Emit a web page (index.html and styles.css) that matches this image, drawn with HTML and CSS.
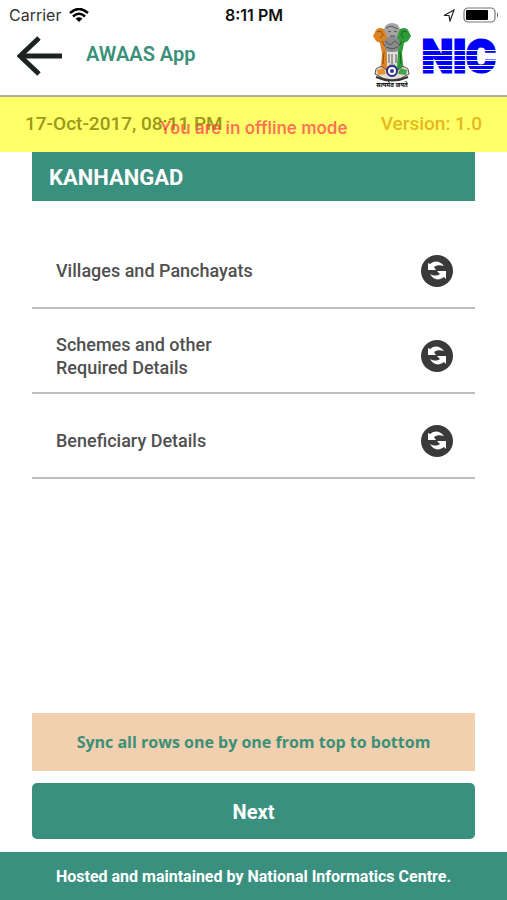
FILE: index.html
```html
<!DOCTYPE html>
<html lang="en">
<head>
  <meta charset="UTF-8">
  <meta name="viewport" content="width=device-width, initial-scale=1.0">
  <title>AWAAS App</title>
  <link rel="stylesheet" href="styles.css">
</head>
<body>
  <!-- Shared sync icon -->
  <svg class="icon-defs" aria-hidden="true">
    <symbol id="sync" viewBox="0 0 32 32">
      <circle cx="16" cy="16" r="16" fill="#3a3a3a"/>
      <path d="M7 8v7h8l-2-3c3-2 6-2 10-1-4-5-9-6-14-2z" fill="#fff"/>
      <path d="M25 24v-8h-9l3 3c-3 2-6 2-10 0 3 6 9 7 14 3z" fill="#fff"/>
    </symbol>
  </svg>

  <header>
    <div class="status-bar">
      <div class="carrier">
        <span>Carrier</span>
        <svg width="20" height="14" viewBox="0 0 20 14" fill="none" stroke="#000" stroke-width="2.500">
          <path d="M1 5Q10-3 19 5M4 8.500Q10 3 16 8.500"/>
          <path d="M6.500 10.500Q10 8 13.500 10.500L10 14z" fill="#000" stroke="none"/>
        </svg>
      </div>
      <span class="clock">8:11 PM</span>
      <div class="indicators">
        <svg width="12" height="13" viewBox="0 0 12 13" fill="none" stroke="#222" stroke-width="1.200">
          <path d="M11 1L1 6.500H6L7 12z"/>
        </svg>
        <svg width="36" height="16" viewBox="0 0 36 16">
          <rect x="1" y="1" width="31" height="14" rx="4" fill="#fff" stroke="#777" stroke-width="1.200"/>
          <rect x="3" y="3" width="22" height="10" rx="1"/>
          <path d="M34 5q2 3 0 6z" fill="#555"/>
        </svg>
      </div>
    </div>

    <div class="nav-bar">
      <button class="back" type="button" aria-label="Back">
        <svg width="46" height="40" viewBox="0 0 46 40" fill="none" stroke="#1d2222">
          <path d="M45 20H3" stroke-width="5"/>
          <path d="M22 2L3 20L22 38" stroke-width="5"/>
        </svg>
      </button>
      <h1>AWAAS App</h1>
      <svg class="emblem" width="40" height="66" viewBox="0 0 40 66">
        <path d="M14 2Q20-2 26 2L29 8L27 19L30 29V48H10V29L13 19L11 8z" fill="#a5a5a5"/>
        <path d="M12 6Q5 3 3 9L1 13L4 18L8 20L10 30L9 42L4 49L16 51L19 37L14 29L14 20L15 14z" fill="#dc8424"/>
        <path d="M28 6Q35 3 37 9L39 13L36 18L32 20L30 30L31 42L36 49L24 51L21 37L26 29L26 20L25 14z" fill="#2f9b38"/>
        <circle cx="20" cy="21" r="8" fill="#8b8b8b"/>
        <path d="M15 29h11l-1 15-5-5-5 5z" fill="#e2e2e2"/>
        <path d="M14 5l5-2 7 3M16 9l3-1m3 0l3 1M18 13h5M13 18l5 4 5-4 5 4M14 24l6 2 6-2M17 31v9m3-9v9m4-9v9" fill="none" stroke="#555"/>
        <path d="M5 9l4-1 2 4-3 3M10 18l3 5M12 29l-1 12" fill="none" stroke="#8d4f16"/>
        <path d="M35 9l-4-1-2 4 3 3M30 18l-3 5M28 29l1 12" fill="none" stroke="#176322"/>
        <path d="M4 46Q10 41 14 47H26Q30 41 36 46L37 51Q28 57 20 57T3 51z" fill="#e6dfd4" stroke="#555"/>
        <path d="M5 47l7-2 2 6-8 1z" fill="#e59135"/>
        <path d="M35 47l-7-2-2 6 8 1z" fill="#44a44a"/>
        <path d="M4 54Q20 61 36 54" fill="none" stroke="#333" stroke-width="2"/>
        <circle cx="20" cy="48" r="5" fill="#fff" stroke="#292889" stroke-width="2"/>
        <circle cx="20" cy="48" r="2" fill="#34349a"/>
        <text x="20" y="64" class="motto">सत्यमेव जयते</text>
      </svg>
      <svg class="nic" width="76" height="38" viewBox="0 0 76 38" role="img" aria-label="NIC">
        <text class="nic-text" x="0" y="35">NIC</text>
        <path d="M0 13.500H76M0 18.500H76M0 23.500H76M0 28.500H76M0 32.500H76" stroke="#fff" stroke-width="1"/>
      </svg>
    </div>
  </header>

  <section class="info">
    <time>17-Oct-2017, 08:11 PM</time>
    <span class="version">Version: 1.0</span>
    <p class="offline">You are in offline mode</p>
  </section>

  <main>
    <h2>KANHANGAD</h2>
    <ul class="sync-list">
      <li>
        <span>Villages and Panchayats</span>
        <button type="button" aria-label="Sync villages and panchayats"><svg width="32" height="32"><use href="#sync"/></svg></button>
      </li>
      <li>
        <span>Schemes and other Required Details</span>
        <button type="button" aria-label="Sync schemes"><svg width="32" height="32"><use href="#sync"/></svg></button>
      </li>
      <li>
        <span>Beneficiary Details</span>
        <button type="button" aria-label="Sync beneficiary details"><svg width="32" height="32"><use href="#sync"/></svg></button>
      </li>
    </ul>
    <p class="hint">Sync all rows one by one from top to bottom</p>
    <button class="next" type="button">Next</button>
  </main>

  <footer>Hosted and maintained by National Informatics Centre.</footer>
</body>
</html>
```

FILE: styles.css
```css
* {
  box-sizing: border-box;
}
body {
  margin: 0;
  min-height: 100vh;
  display: flex;
  flex-direction: column;
  font-family: Roboto, sans-serif;
  background: #fff;
}
h1, h2, p, ul {
  margin: 0;
  padding: 0;
}
button {
  border: none;
  padding: 0;
  background: none;
  font-family: inherit;
  cursor: pointer;
}
svg {
  display: block;
}
.icon-defs {
  position: absolute;
  width: 0;
  height: 0;
}
header {
  border-bottom: 2px solid #b0b0a0;
}

/* Status bar */
.status-bar {
  display: grid;
  grid-template-columns: 1fr auto 1fr;
  align-items: center;
  height: 24px;
  padding: 6px 8px 0 9px;
  font-family: Inter, sans-serif;
  font-size: 16px;
  line-height: 18px;
  color: #333;
}
.carrier, .indicators {
  display: flex;
  align-items: center;
  gap: 8px;
}
.indicators {
  justify-content: flex-end;
}
.clock {
  font-weight: 600;
  color: #111;
}

/* Navigation bar */
.nav-bar {
  display: flex;
  align-items: center;
  height: 71px;
  padding: 0 9px 8px 17px;
}
h1 {
  flex: 1;
  margin-left: 23px;
  padding-bottom: 3px;
  font-size: 20px;
  font-weight: 600;
  color: #3a9079;
}
.motto {
  font-family: "Noto Sans", sans-serif;
  font-size: 6px;
  font-weight: 700;
  text-anchor: middle;
}
.nic {
  margin-left: 10px;
}
.nic-text {
  font-size: 44px;
  font-weight: 900;
  fill: #0000fb;
  stroke: #0000fb;
  stroke-width: 3px;
}

/* Date, version and offline notice */
.info {
  position: relative;
  display: flex;
  justify-content: space-between;
  height: 55px;
  padding: 15px 25px 0;
  background: #ffff68;
  font-size: 19px;
  font-weight: 500;
  line-height: 24px;
  color: #99991b;
}
.version {
  color: #e5b81c;
}
.offline {
  position: absolute;
  inset: 0;
  padding-top: 19px;
  text-align: center;
  font-family: Inter, sans-serif;
  font-size: 17px;
  font-weight: 600;
  color: rgba(255, 50, 80, 0.7);
}

main {
  flex: 1;
  display: flex;
  flex-direction: column;
  padding: 0 32px 13px;
}
h2 {
  padding: 11px 17px 8px;
  background: #3a907f;
  color: #fff;
  font-size: 22px;
  font-weight: 700;
  line-height: 30px;
}
.sync-list {
  margin-top: 23px;
  list-style: none;
}
.sync-list li {
  display: flex;
  justify-content: space-between;
  align-items: center;
  min-height: 85px;
  padding: 10px 22px 0 24px;
  border-bottom: 2px solid #bdbdbd;
  font-size: 18px;
  font-weight: 500;
  line-height: 23px;
  color: #505050;
}
.sync-list span {
  max-width: 200px;
}
.hint {
  margin-top: auto;
  padding: 17px 10px;
  background: #f1cfaf;
  color: #3c9077;
  text-align: center;
  font-family: "Open Sans", sans-serif;
  font-size: 16px;
  font-weight: 700;
  line-height: 24px;
}
.next {
  height: 56px;
  margin-top: 12px;
  padding-top: 2px;
  border-radius: 5px;
  background: #3a907f;
  color: #fff;
  font-size: 20px;
  font-weight: 700;
}
footer {
  padding: 13px 12px 11px;
  background: #3a907f;
  color: #fff;
  text-align: center;
  font-size: 16px;
  font-weight: 700;
  line-height: 24px;
}
```
